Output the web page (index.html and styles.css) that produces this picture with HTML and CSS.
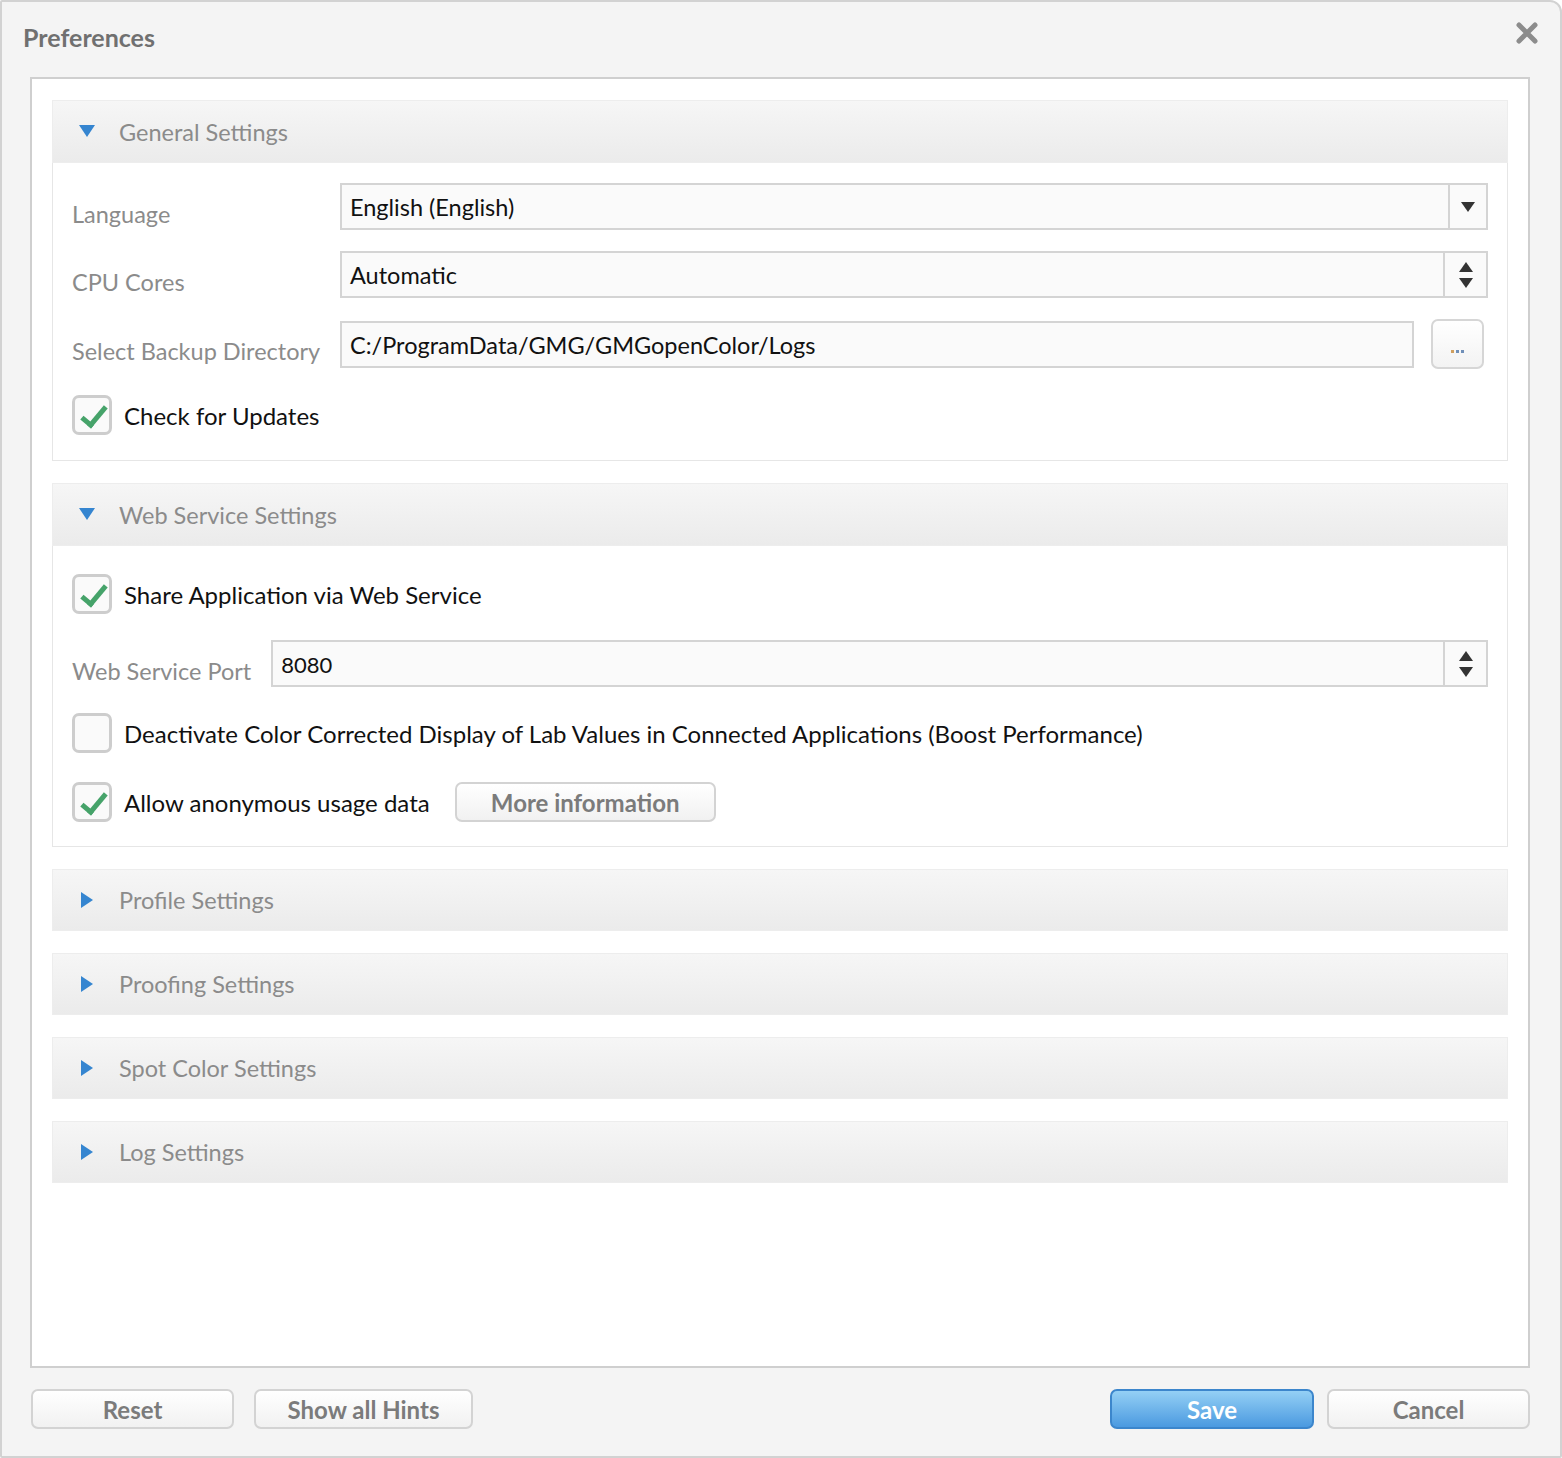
FILE: index.html
```html
<!DOCTYPE html>
<html lang="en">
<head>
    <meta charset="UTF-8">
    <title>Preferences</title>
    <link rel="stylesheet" href="styles.css">
</head>
<body>
    <div class="dialog">
        <div class="dialog-title">
            <span>Preferences</span>
            <svg class="close" width="22" height="22" viewBox="0 0 22 22">
                <path d="M3 3 L19 19 M19 3 L3 19" stroke="#8c8c8c" stroke-width="5" stroke-linecap="round"/>
            </svg>
        </div>

        <div class="content">
            <!-- General -->
            <div class="section">
                <div class="section-head"><span class="arrow down"></span>General Settings</div>
                <div class="section-body general">
                    <div class="field">
                        <label class="field-label wide">Language</label>
                        <div class="input select">
                            <span class="value">English (English)</span>
                            <span class="side"><span class="tri-down"></span></span>
                        </div>
                    </div>
                    <div class="field">
                        <label class="field-label wide">CPU Cores</label>
                        <div class="input spin">
                            <span class="value">Automatic</span>
                            <span class="side stack"><span class="tri-up"></span><span class="tri-down"></span></span>
                        </div>
                    </div>
                    <div class="field">
                        <label class="field-label wide">Select Backup Directory</label>
                        <div class="input path">
                            <span class="value">C:/ProgramData/GMG/GMGopenColor/Logs</span>
                        </div>
                        <button class="browse"><span class="dots"><i></i><i></i><i></i></span></button>
                    </div>
                    <div class="check-row">
                        <span class="checkbox checked"></span>
                        <span class="check-text">Check for Updates</span>
                    </div>
                </div>
            </div>

            <!-- Web service -->
            <div class="section">
                <div class="section-head"><span class="arrow down"></span>Web Service Settings</div>
                <div class="section-body">
                    <div class="check-row">
                        <span class="checkbox checked"></span>
                        <span class="check-text">Share Application via Web Service</span>
                    </div>
                    <div class="field">
                        <label class="field-label">Web Service Port</label>
                        <div class="input spin">
                            <span class="value small">8080</span>
                            <span class="side stack"><span class="tri-up"></span><span class="tri-down"></span></span>
                        </div>
                    </div>
                    <div class="check-row">
                        <span class="checkbox"></span>
                        <span class="check-text">Deactivate Color Corrected Display of Lab Values in Connected Applications (Boost Performance)</span>
                    </div>
                    <div class="check-row">
                        <span class="checkbox checked"></span>
                        <span class="check-text">Allow anonymous usage data</span>
                        <button class="btn info">More information</button>
                    </div>
                </div>
            </div>

            <div class="section collapsed">
                <div class="section-head"><span class="arrow right"></span>Profile Settings</div>
            </div>
            <div class="section collapsed">
                <div class="section-head"><span class="arrow right"></span>Proofing Settings</div>
            </div>
            <div class="section collapsed">
                <div class="section-head"><span class="arrow right"></span>Spot Color Settings</div>
            </div>
            <div class="section collapsed">
                <div class="section-head"><span class="arrow right"></span>Log Settings</div>
            </div>
        </div>

        <div class="footer">
            <button class="btn reset">Reset</button>
            <button class="btn hints">Show all Hints</button>
            <div class="spacer"></div>
            <button class="btn primary">Save</button>
            <button class="btn cancel">Cancel</button>
        </div>
    </div>
</body>
</html>
```

FILE: styles.css
```css
* {
    box-sizing: border-box;
}
body {
    margin: 0;
    font-family: Lato, "Open Sans", sans-serif;
    background-color: #ffffff;
}
.dialog {
    width: 1562px;
    height: 1458px;
    background-color: #f4f4f4;
    border: 2px solid #d2d2d2;
    border-radius: 2px 12px 2px 2px;
    padding: 0 30px 0 28px;
    display: flex;
    flex-direction: column;
}
.dialog-title {
    height: 75px;
    display: flex;
    align-items: center;
    justify-content: space-between;
    padding: 0 0 6px 0;
    margin-left: -7px;
    font-size: 25px;
    font-weight: bold;
    color: #707070;
}
.close {
    margin-right: -8px;
    margin-top: -8px;
}
.content {
    height: 1291px;
    background-color: #ffffff;
    border: 2px solid #cfcfcf;
    padding: 21px 20px 0 20px;
    display: flex;
    flex-direction: column;
    gap: 22px;
}
.section-head {
    height: 63px;
    display: flex;
    align-items: center;
    padding-left: 26px;
    font-size: 23.5px;
    color: #8b8b8b;
    background: linear-gradient(#f6f6f6, #ebebeb);
    border: 1px solid #ededed;
}
.collapsed .section-head {
    height: 62px;
}
.arrow {
    width: 0;
    height: 0;
    margin-right: 24px;
}
.arrow.down {
    border-left: 8px solid transparent;
    border-right: 8px solid transparent;
    border-top: 12px solid #3585d0;
    margin-top: -2px;
}
.arrow.right {
    border-top: 8px solid transparent;
    border-bottom: 8px solid transparent;
    border-left: 12px solid #3585d0;
    margin-left: 2px;
    margin-right: 26px;
}
.section-body {
    border: 1px solid #e6e6e6;
    border-top: none;
    padding: 20px 19px 24px 19px;
    display: flex;
    flex-direction: column;
    gap: 21px;
}
.section-body.general {
    padding-bottom: 25px;
}
.field {
    display: flex;
    align-items: center;
    gap: 20px;
}
.field-label {
    font-size: 23.5px;
    color: #8b8b8b;
    padding-top: 14px;
    white-space: nowrap;
}
.field-label.wide {
    width: 248px;
}
.input {
    flex: 1;
    height: 47px;
    border: 2px solid #d4d4d4;
    background-color: #fafafa;
    display: flex;
    align-items: center;
}
.value {
    flex: 1;
    padding-left: 8px;
    font-size: 23.5px;
    color: #111111;
    padding-top: 1px;
}
.value.small {
    font-size: 22px;
}
.side {
    width: 38px;
    height: 100%;
    border-left: 2px solid #d4d4d4;
    display: flex;
    align-items: center;
    justify-content: center;
}
.spin .side {
    width: 43px;
}
.side.stack {
    flex-direction: column;
    gap: 6px;
}
.tri-down {
    width: 0;
    height: 0;
    border-left: 7px solid transparent;
    border-right: 7px solid transparent;
    border-top: 10px solid #333333;
}
.tri-up {
    width: 0;
    height: 0;
    border-left: 7px solid transparent;
    border-right: 7px solid transparent;
    border-bottom: 10px solid #333333;
}
.browse {
    width: 53px;
    height: 50px;
    margin-left: -3px;
    margin-right: 4px;
    border: 2px solid #d6d6d6;
    border-radius: 7px;
    background: linear-gradient(#ffffff, #f3f3f3);
    display: flex;
    align-items: flex-end;
    justify-content: center;
    padding-bottom: 14px;
}
.dots {
    display: flex;
    gap: 2px;
}
.dots i {
    width: 3px;
    height: 3px;
    background-color: #6f8fb8;
}
.dots i:first-child {
    background-color: #d0a060;
}
.check-row {
    display: flex;
    align-items: center;
    height: 40px;
    margin-top: 8px;
}
.check-row + .field {
    margin-top: 5px;
}
.field + .check-row {
    margin-top: 5px;
}
.checkbox {
    width: 40px;
    height: 40px;
    border: 3px solid #cdcdcd;
    border-radius: 7px;
    background-color: #fafafa;
    margin-right: 12px;
    position: relative;
}
.checkbox.checked::after {
    content: "";
    position: absolute;
    left: 12px;
    top: 3px;
    width: 9px;
    height: 21px;
    border-right: 5px solid #46a36a;
    border-bottom: 5px solid #46a36a;
    transform: rotate(40deg);
}
.check-text {
    font-size: 24px;
    color: #111111;
}
.btn {
    font-family: Lato, "Open Sans", sans-serif;
    font-size: 24px;
    font-weight: bold;
    color: #7b7b7b;
    background: linear-gradient(#ffffff, #f1f1f1);
    border: 2px solid #d3d3d3;
    border-radius: 7px;
    height: 40px;
    padding: 0;
}
.info {
    width: 261px;
    margin-left: 25px;
}
.footer {
    display: flex;
    align-items: center;
    gap: 20px;
    height: 82px;
    padding: 0 0 0 1px;
}
.spacer {
    flex: 1;
}
.reset {
    width: 203px;
}
.hints {
    width: 219px;
}
.primary {
    width: 204px;
    color: #ffffff;
    background: linear-gradient(#94d0f5, #4b9ae0);
    border-color: #3c86cc;
    margin-right: -7px;
}
.cancel {
    width: 203px;
}
```
